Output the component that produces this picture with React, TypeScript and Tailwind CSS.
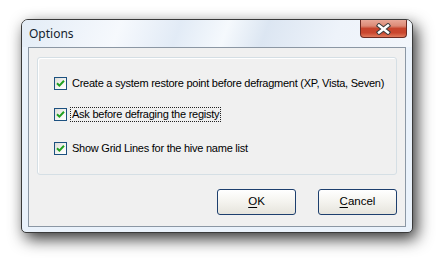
import React from 'react';

const labelFont = { fontFamily: '"Liberation Sans", Arial, sans-serif' };

const Check: React.FC<{ label: string; focused?: boolean }> = ({ label, focused }) => (
  <div className="flex items-center h-[13px]">
    <div className="w-[13px] h-[13px] border border-[#1c5180] bg-[linear-gradient(135deg,#dcdcd7_0%,#f6f6f4_60%,#ffffff_100%)] flex items-center justify-center shrink-0">
      <svg width="9" height="9" viewBox="0 0 9 9">
        <path d="M1 4.2 L3.4 6.6 L8 1.8" fill="none" stroke="#21a121" strokeWidth="2" />
      </svg>
    </div>
    <span
      className={`ml-[4px] text-[11px] leading-[13px] tracking-[-0.25px] text-black px-[1px] ${
        focused ? 'outline-1 outline-dotted outline-[#222]' : ''
      }`}
      style={labelFont}
    >
      {label}
    </span>
  </div>
);

const Btn: React.FC<{ first: string; rest: string }> = ({ first, rest }) => (
  <button
    className="w-[79px] h-[26px] rounded-[3px] border border-[#1d3f6e] bg-[linear-gradient(180deg,#ffffff_0%,#f4f3ee_50%,#e6e4dc_100%)] text-[11.5px] text-black flex items-center justify-center"
    style={labelFont}
  >
    <span className="underline underline-offset-2">{first}</span>
    <span>{rest}</span>
  </button>
);

export default function App() {
  return (
    <div className="w-[438px] h-[258px] bg-white pl-[21px] pt-[19px]">
      <div className="relative flex flex-col w-[392px] h-[214px] rounded-t-[7px] rounded-b-[5px] border border-[#3a3a3a] bg-[#eaf2fb] shadow-[4px_6px_16px_rgba(0,0,0,0.8)] overflow-hidden">
        {/* title bar */}
        <div className="h-[27px] flex items-center pl-[7px] bg-[linear-gradient(110deg,#e3ecf6_0%,#f6f9fd_25%,#e2ebf6_40%,#f5f9fd_52%,#dce6f2_62%,#eef3fa_80%,#f2f6fb_100%)]">
          <span
            className="text-[12px] text-[#141e2e] mt-[1px]"
            style={{ fontFamily: '"Noto Sans", "Open Sans", sans-serif' }}
          >
            Options
          </span>
        </div>

        {/* close button */}
        <div className="absolute top-0 right-[5px] w-[47px] h-[18px] rounded-b-[4px] border border-t-0 border-[#6b2a22] bg-[linear-gradient(180deg,#e9a898_0%,#dc8a76_35%,#c7452d_50%,#c9462e_75%,#e07a5c_100%)] flex items-center justify-center">
          <svg width="17" height="12" viewBox="0 0 17 12">
            <path d="M4 2.5 L13 9.5 M13 2.5 L4 9.5" stroke="#3c3c3c" strokeWidth="4.4" strokeLinecap="square" />
            <path d="M4 2.5 L13 9.5 M13 2.5 L4 9.5" stroke="#ffffff" strokeWidth="2.4" strokeLinecap="square" />
          </svg>
        </div>

        {/* client area */}
        <div className="flex-1 mx-[6px] mb-[5px] border border-[#8b97a4] bg-[#f0f0f0] flex flex-col px-[8px] pt-[9px]">
          <div className="h-[118px] rounded-[3px] border border-[#d5dfe5] shadow-[inset_1px_1px_0_#ffffff] flex flex-col pl-[16px] pt-[19px]">
            <Check label="Create a system restore point before defragment (XP, Vista, Seven)" />
            <div className="mt-[18px]">
              <Check label="Ask before defraging the registy" focused />
            </div>
            <div className="mt-[21px]">
              <Check label="Show Grid Lines for the hive name list" />
            </div>
          </div>
          <div className="flex justify-end gap-[22px] mt-[14px]">
            <Btn first="O" rest="K" />
            <Btn first="C" rest="ancel" />
          </div>
        </div>
      </div>
    </div>
  );
}
